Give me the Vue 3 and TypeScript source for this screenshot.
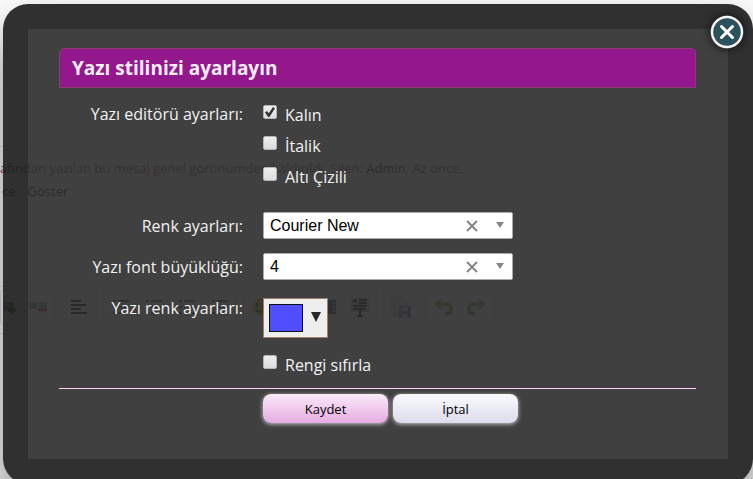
<script setup lang="ts">
import { reactive, ref } from 'vue'

interface StyleOption {
  id: string
  label: string
  checked: boolean
}

const styleOptions = reactive<StyleOption[]>([
  { id: 'bold', label: 'Kalın', checked: true },
  { id: 'italic', label: 'İtalik', checked: false },
  { id: 'underline', label: 'Altı Çizili', checked: false },
])

const fonts: string[] = ['Courier New', 'Arial', 'Georgia', 'Verdana']
const sizes: string[] = ['1', '2', '3', '4', '5', '6', '7']

const font = ref('Courier New')
const size = ref('4')
const resetColor = ref(false)
const open = ref(true)
</script>

<template>
  <div class="screen">
    <div class="page" aria-hidden="true">
      <div class="message">
        <p>afından yazılan bu mesaj genel görünümden kaldırıldı. Silen: <b>Admin</b>, Az önce.</p>
        <p class="reveal"><span>ce</span><b>Göster</b></p>
      </div>
      <div class="toolbar">
        <div class="group group-media">
          <svg width="48" height="20" viewBox="0 0 48 20">
            <path d="M0 5h10v8H0zM25 5h8v7h-8zM35 5h8v7h-8z" fill="#999" />
            <path d="M8 9v8M4 13h8" stroke="#4a9a4a" stroke-width="3" />
            <path d="M34 13h9" stroke="#e02020" stroke-width="3" />
          </svg>
        </div>
        <div class="group">
          <svg width="16" height="16" viewBox="0 0 16 16">
            <path d="M0 2h10M0 6h15M0 10h10M0 14h16" stroke="#000" stroke-width="2" />
          </svg>
        </div>
        <div class="group group-lists">
          <svg v-for="n in 4" :key="n" width="16" height="16" viewBox="0 0 16 16">
            <path d="M0 2h3M5 2h11M0 8h3M5 8h11M0 14h3M5 14h11" stroke="#555" stroke-width="2" />
          </svg>
        </div>
        <div class="group group-insert">
          <svg width="18" height="18" viewBox="0 0 18 18">
            <circle cx="9" cy="9" r="9" fill="#e8b820" />
            <path d="M5 5v4M11 5v4M4 12q5 4 10 0" stroke="#333" stroke-width="2" fill="none" />
          </svg>
          <svg width="18" height="18" viewBox="0 0 18 18">
            <path d="M2 0h14v17H2z" fill="#7899aa" />
          </svg>
          <svg width="18" height="16" viewBox="0 0 18 16">
            <path d="M0 1h18v14H0z" fill="#345" />
            <path d="M2 3v11M16 3v11" stroke="#ccc" stroke-width="2" stroke-dasharray="2 2" />
          </svg>
          <svg width="18" height="20" viewBox="0 0 18 20">
            <path d="M0 1h18v14H0z" fill="#bbb" />
            <path d="M2 4h4M8 3h8M8 6h8M2 9h14M2 12h12M9 13v6M6 19h6" stroke="#111" stroke-width="2" />
          </svg>
        </div>
        <div class="group">
          <svg width="20" height="22" viewBox="0 0 20 22">
            <path d="M0 0h12l5 5v16H0z" fill="#d4e0e0" />
            <path d="M8 10h12v12H8z" fill="#7777aa" />
            <path d="M11 11h6v4h-6zM11 18h6v4h-6z" fill="#d4d4e4" />
          </svg>
        </div>
        <div class="group group-history">
          <svg width="20" height="18" viewBox="0 0 20 18">
            <path d="M0 6l7-6v4h5q7 0 7 7t-8 7v-4q4 0 4-3t-4-3H7v4z" fill="#80b850" />
          </svg>
          <svg width="20" height="18" viewBox="0 0 20 18">
            <path d="M20 6l-7-6v4H8q-7 0-7 7t8 7v-4q-4 0-4-3t4-3h4v4z" fill="#80b850" />
          </svg>
        </div>
      </div>
    </div>

    <form v-if="open" class="dialog" role="dialog" aria-labelledby="dialog-title" @submit.prevent>
      <button class="close" type="button" aria-label="Kapat" @click="open = false">
        <svg width="34" height="34" viewBox="0 0 34 34">
          <circle cx="17" cy="17" r="15" fill="#2b525c" stroke="#f4f4f4" stroke-width="2.4" />
          <path d="M11.5 11.5l11 11M22.5 11.5l-11 11" stroke="#fff" stroke-width="3" stroke-linecap="round" />
        </svg>
      </button>

      <h1 id="dialog-title">Yazı stilinizi ayarlayın</h1>

      <div class="fields">
        <span id="style-label" class="label">Yazı editörü ayarları:</span>
        <div class="checks" role="group" aria-labelledby="style-label">
          <label v-for="option in styleOptions" :key="option.id" class="check">
            <input v-model="option.checked" type="checkbox" />
            <span>{{ option.label }}</span>
          </label>
        </div>

        <label class="label" for="font">Renk ayarları:</label>
        <div class="picker">
          <select id="font" v-model="font">
            <option v-for="name in fonts" :key="name">{{ name }}</option>
          </select>
          <button class="clear" type="button" aria-label="Temizle" @click="font = ''">
            <svg width="12" height="12" viewBox="0 0 12 12">
              <path d="M1 1l10 10M11 1L1 11" stroke="#858585" stroke-width="2" />
            </svg>
          </button>
          <svg class="arrow" width="8" height="6" viewBox="0 0 8 6"><path d="M0 0h8L4 6z" fill="#888" /></svg>
        </div>

        <label class="label" for="size">Yazı font büyüklüğü:</label>
        <div class="picker">
          <select id="size" v-model="size">
            <option v-for="value in sizes" :key="value">{{ value }}</option>
          </select>
          <button class="clear" type="button" aria-label="Temizle" @click="size = ''">
            <svg width="12" height="12" viewBox="0 0 12 12">
              <path d="M1 1l10 10M11 1L1 11" stroke="#858585" stroke-width="2" />
            </svg>
          </button>
          <svg class="arrow" width="8" height="6" viewBox="0 0 8 6"><path d="M0 0h8L4 6z" fill="#888" /></svg>
        </div>

        <label class="label" for="color">Yazı renk ayarları:</label>
        <button id="color" class="color" type="button" aria-label="Yazı renk ayarları">
          <span class="swatch"></span>
          <svg width="10" height="10" viewBox="0 0 10 10"><path d="M0 0h10L5 10z" fill="#282828" /></svg>
        </button>

        <label class="check reset">
          <input v-model="resetColor" type="checkbox" />
          <span>Rengi sıfırla</span>
        </label>
      </div>

      <div class="actions">
        <button class="action save" type="submit">Kaydet</button>
        <button class="action" type="button" @click="open = false">İptal</button>
      </div>
    </form>
  </div>
</template>

<style>
body {
  margin: 0;
  background: #fff;
}
</style>

<style scoped>
.screen {
  position: relative;
  box-sizing: border-box;
  min-height: 100vh;
  max-height: 100vh;
  overflow: hidden;
  padding: 4px 0 0 3px;
  font-family: "Trebuchet MS", "Open Sans", "Noto Sans", sans-serif;
  font-size: 16px;
  line-height: 24px;
}

.page {
  position: absolute;
  inset: 0;
  color: #8c4484;
  font-size: 13px;
}

.message {
  box-sizing: border-box;
  margin-top: 146px;
  padding-top: 10px;
  height: 141px;
  border-top: 1px solid #f4e4f2;
  border-bottom: 1px solid #f4e4f2;
}

.message p {
  margin: 0;
  line-height: 23px;
  white-space: nowrap;
}

.message b {
  color: #301030;
  font-weight: 400;
}

.message .reveal {
  display: flex;
  gap: 12px;
  padding-left: 2px;
}

.toolbar {
  display: flex;
  gap: 6px;
  padding-top: 2px;
  height: 44px;
  border-bottom: 1px solid #f4e4f2;
}

.group {
  display: flex;
  align-items: center;
  justify-content: center;
  box-sizing: border-box;
  width: 36px;
  height: 36px;
  border: 1px solid #e8dce8;
  border-radius: 4px;
}

.group-media {
  width: 55px;
}

.group-lists,
.group-insert {
  justify-content: space-around;
  width: 134px;
}

.group-history {
  gap: 12px;
  width: 70px;
}

.dialog {
  position: relative;
  box-sizing: border-box;
  min-height: 480px;
  padding: 19px 32px 30px 31px;
  border: 25px solid rgba(27, 27, 27, 0.91);
  border-radius: 25px;
  background: rgba(45, 45, 45, 0.91);
  background-clip: padding-box;
  box-shadow: 0 25px 50px rgba(0, 0, 0, 0.5);
  color: #f2f2f2;
}

.close {
  position: absolute;
  top: -14px;
  right: -16px;
  width: 34px;
  height: 34px;
  padding: 0;
  border: 0;
  border-radius: 50%;
  background: none;
  box-shadow: 0 0 8px #111;
  cursor: pointer;
}

.close svg {
  display: block;
}

h1 {
  margin: 0;
  padding: 0 12px;
  border: 1px solid #8c3a72;
  border-radius: 5px 5px 0 0;
  background: #92188c;
  color: #fbeefa;
  font-size: 19px;
  font-weight: 700;
  line-height: 38px;
}

.fields {
  display: grid;
  grid-template-columns: 184px 1fr;
  column-gap: 20px;
  row-gap: 14px;
  padding: 12px 0;
}

.label {
  padding-top: 2px;
  text-align: right;
  white-space: nowrap;
}

.checks {
  display: grid;
  row-gap: 5px;
  padding-bottom: 10px;
}

.check {
  display: flex;
  gap: 8px;
}

.check span {
  padding-top: 4px;
  line-height: 22px;
}

.check input {
  appearance: none;
  flex: none;
  width: 14px;
  height: 14px;
  margin: 5px 0 0;
  border: 1px solid #b4b4b4;
  border-radius: 2px;
  background: linear-gradient(#eee, #dcdcdc);
}

.check input:checked {
  display: grid;
  place-items: center;
}

.check input:checked::after {
  content: "";
  width: 10px;
  height: 10px;
  background: #333;
  clip-path: polygon(0 55%, 20% 40%, 38% 62%, 80% 0, 100% 12%, 44% 100%, 32% 100%);
}

.picker {
  position: relative;
  width: 250px;
  height: 27px;
}

.picker select {
  appearance: none;
  width: 100%;
  height: 100%;
  padding: 0 60px 0 6px;
  border: 1px solid #aaa;
  border-radius: 2px;
  background: #fff;
  color: #000;
  font-family: Arial, "Liberation Sans", sans-serif;
  font-size: 16px;
}

.clear {
  position: absolute;
  top: 8px;
  right: 35px;
  width: 12px;
  height: 12px;
  padding: 0;
  border: 0;
  background: none;
}

.clear svg {
  display: block;
}

.arrow {
  position: absolute;
  top: 10px;
  right: 9px;
  pointer-events: none;
}

.color {
  display: flex;
  align-items: flex-start;
  gap: 8px;
  box-sizing: border-box;
  width: 65px;
  height: 40px;
  margin: 4px 0 0;
  padding: 5px;
  border: 1px solid #a08068;
  background: #eee;
}

.color svg {
  margin-top: 8px;
}

.swatch {
  box-sizing: border-box;
  width: 34px;
  height: 28px;
  border: 1px solid #111;
  background: #504fff;
}

.reset {
  grid-column: 2;
}

.reset input {
  margin-top: 3px;
}

.reset span {
  padding-top: 2px;
}

.actions {
  display: flex;
  gap: 5px;
  padding: 5px 0 0 204px;
  border-top: 1px solid #fccdfa;
}

.action {
  width: 125px;
  height: 29px;
  padding: 0;
  border: 0;
  border-radius: 8px;
  background: linear-gradient(#fafafd, #dcdcec);
  box-shadow: 0 1px 4px #ccc;
  color: #000;
  font: inherit;
  font-size: 13px;
}

.save {
  background: linear-gradient(#fbeaf9, #e5ace2);
}
</style>
